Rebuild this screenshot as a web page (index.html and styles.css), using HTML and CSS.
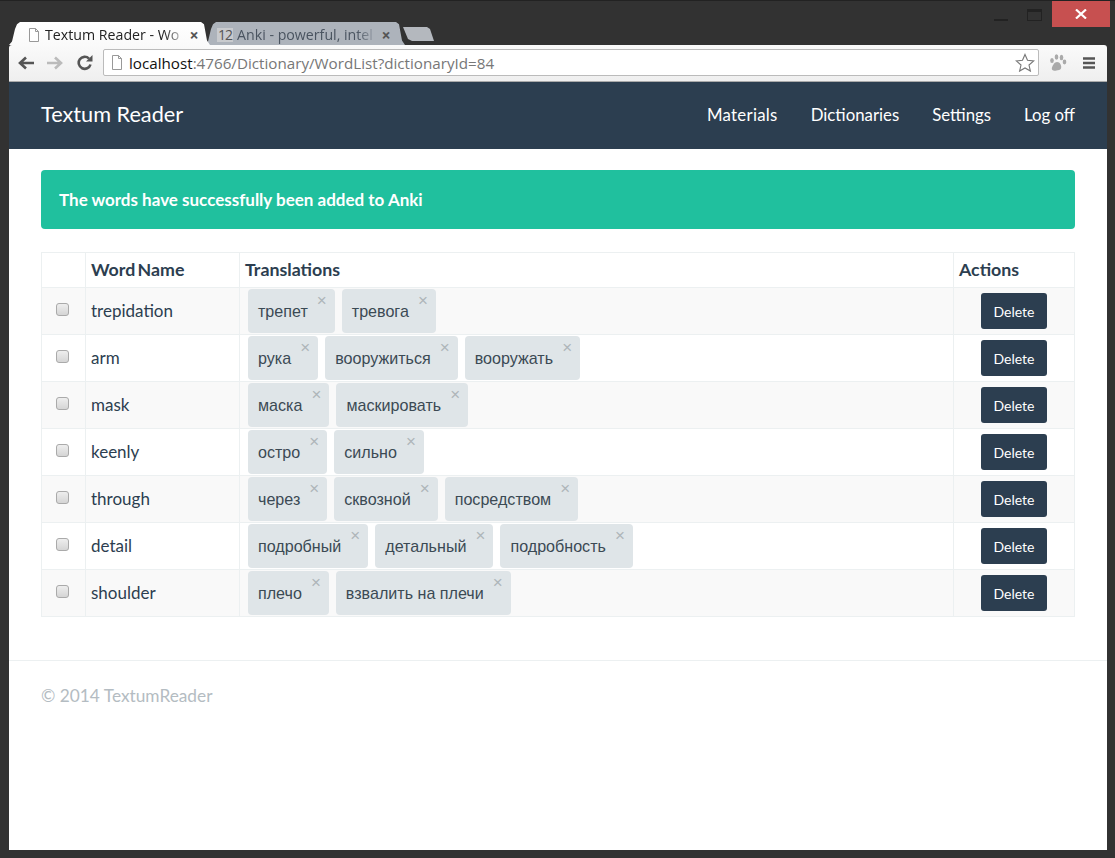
FILE: index.html
```html
<!DOCTYPE html>
<html lang="en">
<head>
<meta charset="utf-8">
<title>Textum Reader</title>
<link rel="stylesheet" href="styles.css">
</head>
<body>
<div class="window">
  <div class="titlebar">
    <div class="tabs">
      <div class="tab tab-active">
        <svg class="favicon" width="12" height="14" viewBox="0 0 12 14"><path d="M1.5.5h6l3 3v10h-9z" fill="#fff" stroke="#999"/><path d="M7.5.5v3h3" fill="none" stroke="#999"/></svg>
        <span class="tab-title">Textum Reader - Wo</span>
        <span class="tab-close">×</span>
      </div>
      <div class="tab tab-other">
        <span class="tab-fav">12</span>
        <span class="tab-title">Anki - powerful, intel</span>
        <span class="tab-close">×</span>
      </div>
      <div class="tab-new"></div>
    </div>
    <div class="winctrl">
      <span class="win-min"></span>
      <span class="win-max"></span>
      <span class="win-close"><svg width="12" height="10" viewBox="0 0 12 10"><path d="M1 .5l10 9M11 .5l-10 9" stroke="#fff" stroke-width="2.2"/></svg></span>
    </div>
  </div>
  <div class="toolbar">
    <svg class="tb-icon" width="18" height="14" viewBox="0 0 18 14"><path d="M17 7H4M9 1.5L3 7l6 5.500" fill="none" stroke="#555" stroke-width="2.600"/></svg>
    <svg class="tb-icon tb-forward" width="18" height="14" viewBox="0 0 18 14"><path d="M1 7h13M9 1.500L15 7l-6 5.500" fill="none" stroke="#bbb" stroke-width="2.600"/></svg>
    <svg class="tb-icon" width="16" height="16" viewBox="0 0 16 16"><path d="M13.500 9.500A6 6 0 1 1 12 3.600" fill="none" stroke="#555" stroke-width="2.600"/><path d="M9 6.500h6.500V0z" fill="#555"/></svg>
    <div class="omnibox">
      <svg width="12" height="15" viewBox="0 0 12 15"><path d="M1.500.5h6l3 3v11h-9z" fill="#fff" stroke="#999"/><path d="M7.500.5v3h3" fill="none" stroke="#999"/></svg>
      <span class="url"><span class="url-host">localhost</span>:4766/Dictionary/WordList?dictionaryId=84</span>
      <svg class="star" width="20" height="19" viewBox="0 0 20 19"><path d="M10 1.500l2.500 5.800 6.200.6-4.700 4.100 1.400 6.100L10 15l-5.400 3.100L6 12 1.300 7.900l6.200-.6z" fill="#fff" stroke="#777" stroke-width="1.100"/></svg>
    </div>
    <svg class="paw" width="18" height="18" viewBox="0 0 18 18" fill="#aaa"><ellipse cx="3" cy="6.500" rx="1.800" ry="2.500"/><ellipse cx="7.500" cy="3" rx="1.800" ry="2.700"/><ellipse cx="12.500" cy="3.500" rx="1.800" ry="2.700"/><ellipse cx="15.500" cy="8" rx="1.800" ry="2.400"/><path d="M8 8c3 0 5 3.500 4 6.500-.7 2-3 1.500-4.500 2C5 17.500 2 16 3 13.500 4 11 5.500 8 8 8z"/></svg>
    <svg class="menu" width="14" height="14" viewBox="0 0 14 14"><path d="M1 2.500h12M1 7h12M1 11.500h12" stroke="#555" stroke-width="2.400"/></svg>
  </div>
  <main class="page">
    <nav class="navbar">
      <a class="brand">Textum Reader</a>
      <div class="nav-links">
        <a>Materials</a><a>Dictionaries</a><a>Settings</a><a>Log off</a>
      </div>
    </nav>
    <div class="container">
      <div class="alert">The words have successfully been added to Anki</div>
      <table class="words">
        <thead>
          <tr><th class="c-check"></th><th class="c-word">Word Name</th><th>Translations</th><th class="c-actions">Actions</th></tr>
        </thead>
        <tbody>
          <tr>
            <td class="c-check"><span class="checkbox"></span></td><td>trepidation</td>
            <td class="c-tags"><div class="tags"><span class="tag">трепет<i>×</i></span><span class="tag">тревога<i>×</i></span></div></td>
            <td class="c-btn"><button class="btn">Delete</button></td>
          </tr>
          <tr>
            <td class="c-check"><span class="checkbox"></span></td><td>arm</td>
            <td class="c-tags"><div class="tags"><span class="tag">рука<i>×</i></span><span class="tag">вооружиться<i>×</i></span><span class="tag">вооружать<i>×</i></span></div></td>
            <td class="c-btn"><button class="btn">Delete</button></td>
          </tr>
          <tr>
            <td class="c-check"><span class="checkbox"></span></td><td>mask</td>
            <td class="c-tags"><div class="tags"><span class="tag">маска<i>×</i></span><span class="tag">маскировать<i>×</i></span></div></td>
            <td class="c-btn"><button class="btn">Delete</button></td>
          </tr>
          <tr>
            <td class="c-check"><span class="checkbox"></span></td><td>keenly</td>
            <td class="c-tags"><div class="tags"><span class="tag">остро<i>×</i></span><span class="tag">сильно<i>×</i></span></div></td>
            <td class="c-btn"><button class="btn">Delete</button></td>
          </tr>
          <tr>
            <td class="c-check"><span class="checkbox"></span></td><td>through</td>
            <td class="c-tags"><div class="tags"><span class="tag">через<i>×</i></span><span class="tag">сквозной<i>×</i></span><span class="tag">посредством<i>×</i></span></div></td>
            <td class="c-btn"><button class="btn">Delete</button></td>
          </tr>
          <tr>
            <td class="c-check"><span class="checkbox"></span></td><td>detail</td>
            <td class="c-tags"><div class="tags"><span class="tag">подробный<i>×</i></span><span class="tag">детальный<i>×</i></span><span class="tag">подробность<i>×</i></span></div></td>
            <td class="c-btn"><button class="btn">Delete</button></td>
          </tr>
          <tr>
            <td class="c-check"><span class="checkbox"></span></td><td>shoulder</td>
            <td class="c-tags"><div class="tags"><span class="tag">плечо<i>×</i></span><span class="tag">взвалить на плечи<i>×</i></span></div></td>
            <td class="c-btn"><button class="btn">Delete</button></td>
          </tr>
        </tbody>
      </table>
    </div>
    <footer class="footer">© 2014 TextumReader</footer>
  </main>
</div>
</body>
</html>
```
FILE: styles.css
```css
* { box-sizing: border-box; }
html, body { margin: 0; height: 100%; overflow: hidden; }
body { font-family: Lato, sans-serif; color: #2c3e50; background: #333; }
.window { width: 1115px; height: 858px; background: #323232; padding: 0 8px 8px 9px; display: flex; flex-direction: column; border-top: 1px solid #222; }

.titlebar { height: 44px; flex: none; display: flex; justify-content: space-between; }
.tabs { display: flex; align-items: flex-end; }
.tab { height: 23px; padding-top: 2px; display: flex; align-items: center; font: 14.2px/20px "Open Sans", sans-serif; clip-path: polygon(0 100%, 3px 85%, 6px 30%, 8px 10%, 11px 0, calc(100% - 9px) 0, calc(100% - 6px) 10%, calc(100% - 3px) 80%, 100% 100%); }
.tab-active { width: 201px; background: linear-gradient(#fff, #fafafa); color: #222; padding-left: 19px; position: relative; z-index: 2; }
.tab-other { width: 200px; margin-left: -5px; background: #adb3bb; color: #4a5460; padding-left: 12px; }
.favicon { margin-right: 5px; flex: none; }
.tab-fav { width: 16px; height: 14px; background: #c9cbce; color: #555; font-size: 14px; line-height: 14px; margin-right: 4px; flex: none; letter-spacing: -1px; text-align: center; }
.tab-title { white-space: nowrap; width: 136px; flex: none; -webkit-mask-image: linear-gradient(to right, #000 88%, rgba(0,0,0,.25)); mask-image: linear-gradient(to right, #000 88%, rgba(0,0,0,.25)); }
.tab-close { width: 12px; margin-left: 7px; font-size: 16px; font-weight: 700; color: #555; text-align: center; flex: none; }
.tab-new { width: 31px; height: 14px; margin: 0 0 4px -2px; background: #b4b8be; clip-path: polygon(0 0, 24px 0, 27px 15%, 31px 100%, 9px 100%, 5px 85%); position: relative; }

.winctrl { display: flex; align-items: flex-start; }
.win-min { width: 14px; height: 2px; background: #222; margin: 18px 19px 0 0; }
.win-max { width: 15px; height: 12px; border: 1px solid #222; border-top-width: 3px; margin: 8px 10px 0 0; }
.win-close { width: 58px; height: 26px; background: #c75050; display: flex; align-items: center; justify-content: center; margin-right: -3px; }

.toolbar { height: 37px; flex: none; display: flex; align-items: center; padding: 0 11px 1px 8px; background: linear-gradient(#fafafa, #efefef); border-bottom: 1px solid #aaa; border-radius: 3px 3px 0 0; }
.tb-icon { flex: none; margin-right: 11px; }
.tb-forward { margin-right: 13px; }
.tb-icon:nth-child(3) { margin-right: 10px; }
.omnibox { flex: 1; height: 27px; background: #fff; border: 1px solid #bbb; border-radius: 2px; display: flex; align-items: center; padding: 0 3px 0 7px; font: 15.2px "Open Sans", sans-serif; color: #777; }
.url { flex: 1; margin-left: 6px; white-space: nowrap; }
.url-host { color: #111; }
.paw { margin: 0 15px 0 10px; flex: none; }
.menu { flex: none; }

.page { flex: 1; background: #fff; display: flex; flex-direction: column; min-height: 0; }
.navbar { height: 67px; flex: none; background: #2c3e50; display: flex; align-items: center; justify-content: space-between; padding: 0 32px 2px; color: #fff; }
.brand { font-size: 21.7px; margin-bottom: 1px; }
.nav-links { display: flex; gap: 33px; font-size: 16.8px; }
.nav-links a:first-child { letter-spacing: .3px; }

.container { padding: 21px 32px 0; }
.alert { height: 59px; background: #20c09e; color: #fff; font-size: 17px; font-weight: 700; border-radius: 4px; padding: 0 18px; display: flex; align-items: center; margin-bottom: 23px; }

.words { width: 100%; border-collapse: collapse; table-layout: fixed; font-size: 17px; }
.words th, .words td { border: 1px solid #ecf0f1; padding: 0 5px 2px; height: 47px; text-align: left; vertical-align: middle; }
.words th { height: 35px; font-size: 17.8px; font-weight: 700; }
.words tbody tr:nth-child(odd) { background: #f9f9f9; }
.c-check { width: 44px; }
.c-word { width: 154px; word-spacing: -2px; }
.c-actions { width: 121px; }
.words td.c-check { text-align: center; padding: 0 2px 8px 0; }
.words td.c-btn { text-align: center; padding: 0; }
.words td.c-tags { padding: 0 0 0 8px; }
.checkbox { display: inline-block; width: 13px; height: 13px; border: 1px solid #aaa; border-radius: 3px; background: linear-gradient(#eee, #d5d5d5); vertical-align: middle; }
.tags { display: flex; gap: 7px; }
.tag { position: relative; height: 44px; display: flex; align-items: center; padding: 1px 27px 0 10px; background: #dfe5e8; border-radius: 4px; font: 16.1px "Liberation Sans", sans-serif; color: #3b4a54; white-space: nowrap; }
.tag i { position: absolute; top: 3px; right: 8px; font: normal 17px/17px "Liberation Sans", sans-serif; color: #aeb5b9; }
.btn { width: 66px; height: 36px; border: 0; border-radius: 3px; background: #2c3e50; color: #fff; font: 14px Lato, sans-serif; padding: 0; }

.footer { margin-top: 43px; border-top: 1px solid #ecf0f1; padding: 24px 32px 0; font-size: 17.3px; color: #b4bcc2; }
```
